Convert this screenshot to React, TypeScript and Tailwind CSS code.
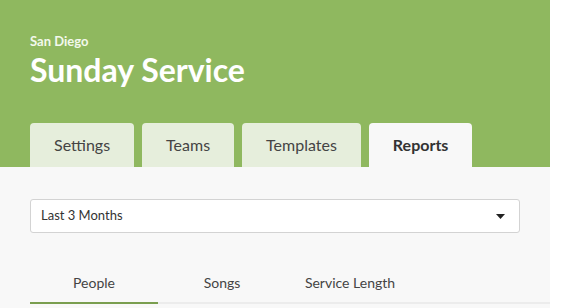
import React, { useState } from "react";

const tabs = ["Settings", "Teams", "Templates", "Reports"];
const subTabs = ["People", "Songs", "Service Length"];

export default function App() {
  const [tab, setTab] = useState("Reports");
  const [subTab, setSubTab] = useState("People");

  return (
    <div className="min-h-screen bg-white font-['Lato','Liberation_Sans',sans-serif]">
      <div className="w-[550px]">
        {/* Header */}
        <div className="bg-[#8fb85f] h-[167px] px-[30px] pt-[32px] flex flex-col">
          <div className="text-[13px] leading-[18px] font-bold text-[#f3f8ec]">San Diego</div>
          <h1 className="text-[32px] leading-[40px] font-bold text-white">Sunday Service</h1>
          <div className="mt-auto flex gap-2">
            {tabs.map((t) => (
              <button
                key={t}
                onClick={() => setTab(t)}
                className={
                  t === tab
                    ? "h-[44px] px-6 rounded-t-[4px] bg-[#f8f8f8] text-[16px] font-bold text-[#333]"
                    : "h-[44px] px-6 rounded-t-[4px] bg-[#e6eedc] text-[16px] text-[#444]"
                }
              >
                {t}
              </button>
            ))}
          </div>
        </div>

        {/* Reports panel */}
        <div className="bg-[#f8f8f8] h-[141px] px-[30px] pt-[32px]">
          <div className="w-[490px] h-[34px] bg-white border border-[#d3d3d3] rounded-[3px] flex items-center justify-between pl-[10px] pr-[14px]">
            <span className="text-[13px] text-[#333]">Last 3 Months</span>
            <svg width="9" height="5" viewBox="0 0 9 5">
              <path d="M0 0h9L4.5 5z" fill="#222" />
            </svg>
          </div>

          <div className="mt-[30px] flex border-b-2 border-[#ececec] mr-[-30px]">
            {subTabs.map((s) => (
              <button
                key={s}
                onClick={() => setSubTab(s)}
                className={
                  s === subTab
                    ? "w-[128px] h-[41px] -mb-[2px] border-b-2 border-[#7a9e4f] text-[14px] text-[#444]"
                    : "w-[128px] h-[41px] -mb-[2px] border-b-2 border-transparent text-[14px] text-[#444]"
                }
              >
                {s}
              </button>
            ))}
          </div>
        </div>
      </div>
    </div>
  );
}
